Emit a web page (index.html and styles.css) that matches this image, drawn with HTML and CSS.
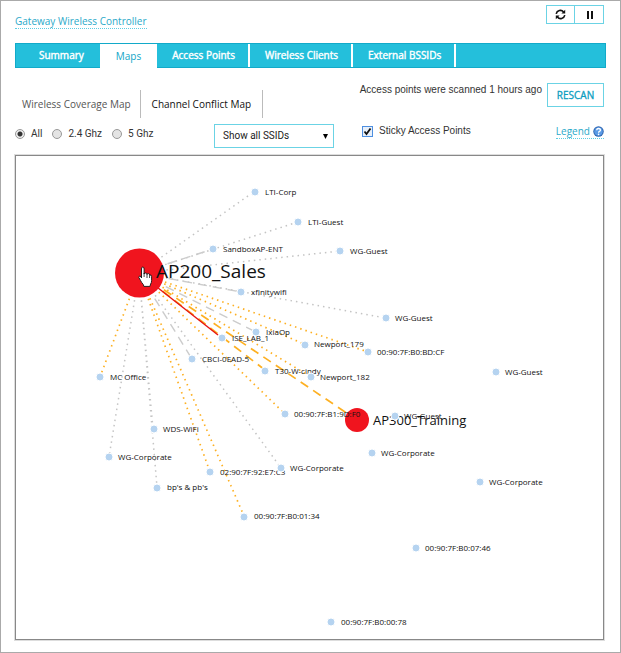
FILE: index.html
```html
<!DOCTYPE html>
<html lang="en">
<head>
<meta charset="utf-8">
<title>Gateway Wireless Controller</title>
<link rel="stylesheet" href="styles.css">
</head>
<body>
<main class="page">
  <header class="header">
    <a class="dotted-link" href="#">Gateway Wireless Controller</a>
    <div class="button-pair">
      <button type="button" aria-label="Refresh">
        <svg width="11" height="11" viewBox="0 0 11 11" fill="none" stroke="#111" stroke-width="1.6"><path d="M1.2 4.8A4.2 4.2 0 0 1 8.6 3M9.8 6.2A4.2 4.2 0 0 1 2.4 8"/><path d="M10.2.8v3.8H6.4zM.8 10.2V6.4h3.8z" fill="#111" stroke="none"/></svg>
      </button>
      <button type="button" aria-label="Pause">
        <svg width="7" height="8" viewBox="0 0 7 8" fill="#111"><path d="M1 0h2v8H1zM5 0h2v8H5z"/></svg>
      </button>
    </div>
  </header>

  <nav class="tabs">
    <a class="first" href="#">Summary</a>
    <a class="active" href="#">Maps</a>
    <a href="#">Access Points</a>
    <a href="#">Wireless Clients</a>
    <a href="#">External BSSIDs</a>
  </nav>

  <section class="subheader">
    <nav class="subtabs">
      <a href="#">Wireless Coverage Map</a>
      <a class="current" href="#">Channel Conflict Map</a>
    </nav>
    <div class="scan">
      <span>Access points were scanned 1 hours ago</span>
      <button type="button">RESCAN</button>
    </div>
  </section>

  <form class="filters">
    <div class="bands">
      <label><input type="radio" name="band" checked>All</label>
      <label><input type="radio" name="band">2.4 Ghz</label>
      <label><input type="radio" name="band">5 Ghz</label>
    </div>
    <select aria-label="SSID"><option>Show all SSIDs</option></select>
    <label class="sticky"><input type="checkbox" checked>Sticky Access Points</label>
    <a class="dotted-link legend" href="#">Legend
      <svg width="11" height="11" viewBox="0 0 11 11"><circle cx="5.500" cy="5.500" r="5.200" fill="#2c62ad"/><circle cx="5.500" cy="5.500" r="4.300" fill="#5b9be6"/><path d="M3.600 4.300Q3.800 2.500 5.600 2.500T7.500 4.100Q7.400 5 6.400 5.400 5.600 5.800 5.600 6.700" fill="none" stroke="#fff" stroke-width="1.300"/><circle cx="5.600" cy="8.400" r=".8" fill="#fff"/></svg>
    </a>
  </form>

  <div class="map">
    <svg viewBox="16 156 587 483" role="img" aria-label="Channel conflict map">
      <g class="dotted">
        <path d="M139 273 255 191M139 273 298 222M139 273 340 251M139 273 386 318M139 273 109 457M139 273 153 429M139 273 157 487M139 273 281 468"/>
      </g>
      <g class="dashed"><path d="M139 273 213 249M139 273 241 292M139 273 256 332M139 273 192 359"/></g>
      <g class="dotted orange">
        <path d="M139 273 100 377M139 273 210 472M139 273 244 516M139 273 285 414M139 273 304 344M139 273 368 352M139 273 311 377"/>
      </g>
      <g class="dashed orange"><path d="M139 273 265 370M139 273 357 420"/></g>
      <path class="conflict" d="M139 273 218 335"/>
      <circle class="ap" cx="139.500" cy="273" r="24.500"/>
      <circle class="ap" cx="357" cy="420" r="12"/>
      <text class="ap-large" x="156" y="278">AP200_Sales</text>
      <text class="ap-small" x="373" y="425">AP300_Training</text>
      <g class="labels">
        <text x="265" y="195">LTI-Corp</text>
        <text x="308" y="225">LTI-Guest</text>
        <text x="223" y="252">SandboxAP-ENT</text>
        <text x="350" y="254">WG-Guest</text>
        <text x="251" y="295">xfinitywifi</text>
        <text x="395" y="321">WG-Guest</text>
        <text x="266" y="335">IxiaOp</text>
        <text x="232" y="341">ISE_LAB_1</text>
        <text x="314" y="347">Newport_179</text>
        <text x="377" y="355">00:90:7F:B0:BD:CF</text>
        <text x="202" y="362">CBCI-0EAD-5</text>
        <text x="275" y="374">T30-W-cindy</text>
        <text x="320" y="380">Newport_182</text>
        <text x="110" y="380">MC Office</text>
        <text x="505" y="375">WG-Guest</text>
        <text x="294" y="417">00:90:7F:B1:9D:F0</text>
        <text x="404" y="419">WG-Guest</text>
        <text x="163" y="432">WDS-WiFi</text>
        <text x="118" y="460">WG-Corporate</text>
        <text x="381" y="456">WG-Corporate</text>
        <text x="220" y="475">02:90:7F:92:E7:C3</text>
        <text x="290" y="471">WG-Corporate</text>
        <text x="489" y="485">WG-Corporate</text>
        <text x="167" y="490">bp's &amp; pb's</text>
        <text x="254" y="519">00:90:7F:B0:01:34</text>
        <text x="425" y="551">00:90:7F:B0:07:46</text>
        <text x="341" y="625">00:90:7F:B0:00:78</text>
      </g>
      <g class="nodes">
        <circle cx="255" cy="192" r="4"/><circle cx="298" cy="222" r="4"/>
        <circle cx="213" cy="249" r="4"/><circle cx="340" cy="251" r="4"/>
        <circle cx="241" cy="292" r="4"/><circle cx="386" cy="318" r="4"/>
        <circle cx="256" cy="332" r="4"/><circle cx="222" cy="338" r="4"/>
        <circle cx="305" cy="345" r="4"/><circle cx="368" cy="352" r="4"/>
        <circle cx="192" cy="359" r="4"/><circle cx="265" cy="371" r="4"/>
        <circle cx="311" cy="377" r="4"/><circle cx="100" cy="377" r="4"/>
        <circle cx="496" cy="372" r="4"/><circle cx="285" cy="414" r="4"/>
        <circle cx="395" cy="416" r="4"/><circle cx="154" cy="429" r="4"/>
        <circle cx="109" cy="457" r="4"/><circle cx="372" cy="453" r="4"/>
        <circle cx="210" cy="472" r="4"/><circle cx="281" cy="468" r="4"/>
        <circle cx="480" cy="482" r="4"/><circle cx="157" cy="488" r="4"/>
        <circle cx="244" cy="517" r="4"/><circle cx="416" cy="548" r="4"/>
        <circle cx="331" cy="622" r="4"/>
      </g>
      <path d="M141.500 269q0-2 1.300-2t1.300 2v5q.2-1 1.500-1t1.500 1.400q.3-1 1.400-.8t1.200 1.300q1.900-.2 1.900 1.700v4q0 2-1 3.500l-.7 2.300h-6l-.7-2q-1.500-1.500-2.700-4l-1.700-3q.2-2 2.200-.9L141.500 278z" fill="#fff" stroke="#111" stroke-width=".9"/>
      <path d="M144.100 273v4M147 274v4M149.600 275v3" stroke="#111" stroke-width=".8"/>
    </svg>
  </div>
</main>
</body>
</html>
```
FILE: styles.css
```css
* { box-sizing: border-box; }
body {
  margin: 0;
  background: #fff;
  color: #333;
  font: 10px/14px "Open Sans", sans-serif;
}
.page {
  min-height: 100vh;
  padding: 4px 16px 11px 14px;
  border: 1px solid #aaa;
}
a { color: inherit; text-decoration: none; }
button {
  padding: 0;
  border: 1px solid #6bd3e5;
  background: #fff;
  color: #0b9dc0;
  font: 10px/14px "Open Sans", sans-serif;
  -webkit-text-stroke: 0.3px;
}
.dotted-link {
  border-bottom: 1px dotted #5ecde3;
  color: #2aa9c9;
}
.header {
  display: flex;
  align-items: flex-start;
  justify-content: space-between;
  height: 38px;
}
.header .dotted-link { margin-top: 9px; }
.button-pair { display: flex; }
.button-pair button {
  display: grid;
  place-items: center;
  width: 29px;
  height: 19px;
}
.button-pair button + button { border-left: 0; }
.tabs {
  display: flex;
  height: 25px;
  margin-right: -2px;
  border: 1px solid #12aac9;
  background: #24bfdb;
  color: #fff;
  -webkit-text-stroke: 0.4px;
}
.tabs a {
  padding: 4px 13px 4px 15px;
  border-right: 2px solid #fff;
}
.tabs .first { padding: 4px 16px 4px 23px; border-right: 0; }
.tabs .active {
  margin: 0 0 -1px;
  padding: 5px 16px 4px;
  border: 0;
  background: #fff;
  color: #12a6c7;
  -webkit-text-stroke: 0;
}
.subheader {
  display: flex;
  justify-content: space-between;
  height: 56px;
  padding-top: 15px;
}
.subtabs { display: flex; padding-top: 7px; }
.subtabs a {
  height: 28px;
  padding: 7px 11px;
  border-right: 1px solid #bbb;
}
.subtabs a:first-child { padding: 7px 9px 7px 7px; color: #555; }
.subtabs .current { color: #111; }
.scan {
  display: flex;
  gap: 5px;
  font-family: "Liberation Sans", sans-serif;
}
.scan span { white-space: nowrap; }
.scan button { width: 57px; height: 24px; }
.filters {
  display: grid;
  grid-template-columns: 199px 120px 1fr auto;
  height: 31px;
  font-family: Roboto, sans-serif;
}
.bands { display: flex; gap: 10px; padding-top: 3px; }
label { display: flex; align-items: center; height: 14px; }
input { appearance: none; margin: 0; background: #fff; }
input[type="radio"] {
  width: 10px;
  height: 10px;
  margin-right: 6px;
  border: 1px solid #999;
  border-radius: 50%;
  background: #e4e4e4;
}
input[type="radio"]:checked {
  background: radial-gradient(circle, #333 2px, #eee 3px);
}
select {
  appearance: none;
  height: 24px;
  padding: 0 8px;
  border: 1px solid #6bd3e5;
  border-radius: 0;
  background: url("data:image/svg+xml,%3Csvg xmlns='http://www.w3.org/2000/svg' width='5' height='5'%3E%3Cpath d='M0 0h5L2.500 5z'/%3E%3C/svg%3E") no-repeat right 5px center #fff;
  color: #222;
  font: 10px/14px Roboto, sans-serif;
}
.sticky { padding-left: 28px; font-family: "Liberation Sans", sans-serif; }
input[type="checkbox"] {
  width: 11px;
  height: 11px;
  margin-right: 6px;
  border: 1px solid #4e8fe0;
  background: url("data:image/svg+xml,%3Csvg xmlns='http://www.w3.org/2000/svg' viewBox='0 0 9 9'%3E%3Cpath d='M1.500 4.500l2 2.500L7.500 1.500' fill='none' stroke='%23111' stroke-width='1.800'/%3E%3C/svg%3E") center / 9px 9px no-repeat #e8f0fa;
}
.legend {
  display: flex;
  align-items: center;
  gap: 3px;
  height: 15px;
  font-family: "Open Sans", sans-serif;
}
.map { border: 1px solid #888; box-shadow: 0 0 0 1px #ddd; }
.map svg { display: block; width: 100%; height: auto; }
.dotted { stroke: #c4c4c4; stroke-width: 1.5; stroke-dasharray: 1.5 4; }
.dashed { stroke: #ccc; stroke-width: 1.4; stroke-dasharray: 9 6; }
.orange { stroke: #fdb022; stroke-width: 1.7; }
.conflict { stroke: #e81410; stroke-width: 1.4; }
.ap { fill: #f0141e; }
.map text { fill: #111; font-family: "Open Sans", sans-serif; }
.map .ap-large { font-size: 19px; }
.map .ap-small { font-size: 13px; }
.labels { font-size: 8px; }
.nodes { fill: #b5d3f0; stroke: #fff; stroke-width: 1; }
```
